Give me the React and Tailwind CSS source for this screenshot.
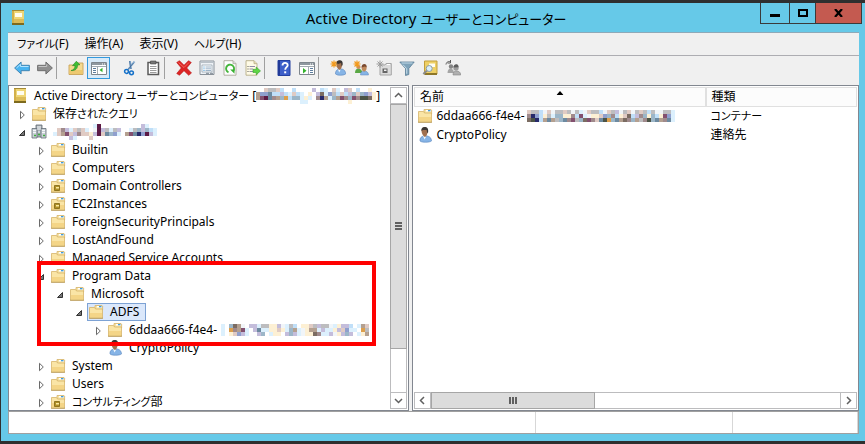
import React, { useState } from 'react';
import clsx from 'clsx';

/* ---------- icons ---------- */

const Icon = ({ children, className }) => (
  <svg viewBox="0 0 16 16" className={clsx('h-4 w-4 shrink-0', className)} aria-hidden="true">
    {children}
  </svg>
);

const BookIcon = ({ className }) => (
  <Icon className={className}>
    <path d="M2 0h12v14H2z" fill="#efd676" />
    <path d="M2 0h2v14H2z" fill="#d2b04a" />
    <path d="M4 9h10v4H4z" fill="#dcbc58" />
    <path d="M2 13h12v2H2z" fill="#7d6a1e" />
    <path d="M2 0h12v1H2z" fill="#a58a35" />
    <path d="M5 3h7v4H5z" fill="#fffdf0" />
  </Icon>
);

const FolderBase = () => (
  <>
    <path d="M7 1.500h7l.6.6V6H7z" fill="#f7e3a4" stroke="#d6b469" strokeWidth=".8" />
    <path d="M9 2h5v1.500H9z" fill="#fff" />
    <path d="M11 2h2.500v1.300H11z" fill="#3f9be0" />
    <path d="M1.500 3.500h5l1 1.500h7v9h-13z" fill="#fae5a6" stroke="#d6b469" strokeWidth=".8" />
    <path d="M2 9h12v4.600H2z" fill="#f4d587" />
    <path d="M1 14.300h14" stroke="#b3914a" strokeWidth=".8" />
  </>
);

const FolderIcon = () => (
  <Icon>
    <FolderBase />
  </Icon>
);

const OuIcon = () => (
  <Icon>
    <FolderBase />
    <path d="M4.500 7.500h5v5h-5z" fill="#b08f26" stroke="#7d6512" strokeWidth=".8" />
    <path d="M6 9h3v1.500H6z" fill="#fbe9a0" />
  </Icon>
);

const DomainIcon = () => (
  <Icon>
    <path d="M5 1h6v12H5z" fill="#a9b1b8" stroke="#5f6870" strokeWidth=".8" />
    <path d="M1 4.500h5v9.500H1zM10 4.500h5v9.500h-5z" fill="#c9d0d6" stroke="#626c75" strokeWidth=".8" />
    <path d="M6 3h4M6 5h4M2 6.500h3M2 8.500h3M11 6.500h3M11 8.500h3M7 8h2" stroke="#f4f7f9" />
    <path d="M3 11.500h2M12 11.500h2M7 10.500h2" stroke="#3fae3d" strokeWidth="1.500" />
  </Icon>
);

const PersonIcon = () => (
  <Icon>
    <path d="M3 14c-.5-3 1.500-4.500 3.500-5h4c2.500.5 4 2.500 4 5-1.500 1.500-10 1.800-11.500 0z" fill="#86b4e6" stroke="#5a87bd" strokeWidth=".6" />
    <path d="M6 9l1.500 3.500L9.300 9.500z" fill="#f4f8fc" />
    <path d="M4.500 3.500C4.500 1.500 5.800.3 7.500.3s3.300 1.200 3.300 3.500S9.500 9.800 8 9.800 4.500 6.500 4.500 3.500z" fill="#a0704f" />
    <path d="M4.500 4C4 1.500 5.500 0 7.700 0s4 1.200 3.400 5.500l-.9.5-.5-3H6z" fill="#3a3634" />
  </Icon>
);

const Star = () => (
  <path d="M4 .5v7M.5 4h7M1.500 1.500l5 5M6.500 1.500l-5 5" stroke="#f29a1d" strokeWidth="1.200" />
);

const BackIcon = () => (
  <Icon>
    <path d="M.6 8l6.500-6v3.300h8.300v5.400H7.100V14z" fill="#49b4f0" stroke="#3a7fae" strokeWidth=".9" />
    <path d="M2.500 8l4-3.700v2.200h8" stroke="#b4e4ff" fill="none" />
  </Icon>
);

const ForwardIcon = () => (
  <Icon>
    <path d="M15.400 8L8.900 2v3.300H.6v5.400h8.300V14z" fill="#8f8f8f" stroke="#686868" strokeWidth=".9" />
    <path d="M1.500 6.500h8.200v-2.200" stroke="#c4c4c4" fill="none" />
  </Icon>
);

const UpFolderIcon = () => (
  <Icon>
    <path d="M1 5h6l1-2h7v11.500H1z" fill="#f5da90" stroke="#c9a256" strokeWidth=".9" />
    <path d="M1.500 10h13v4h-13z" fill="#edc970" />
    <path d="M3 10.500c3-.5 4-2.500 4-5L4.500 5.700 8.300 1.300 12 4.700l-2.500.4C9.700 9 7 11 3 10.500z" fill="#3fbf35" stroke="#248a21" strokeWidth=".6" />
  </Icon>
);

const TreePaneIcon = () => (
  <Icon>
    <path d="M.5 2.500h15v12H.5z" fill="#fff" stroke="#7e868d" />
    <path d="M1 3h14v2H1z" fill="#8f989f" />
    <path d="M11 4h1M13 4h1" stroke="#fff" />
    <path d="M6.500 6v8M1 6.500h14" stroke="#a3abb1" />
    <path d="M2 8.500h3M2 10.500h3M2 12.500h3" stroke="#5c7d9e" />
    <path d="M11.500 7.700v4.600L8.500 10z" fill="#34b32c" />
  </Icon>
);

const ActionPaneIcon = () => (
  <Icon>
    <path d="M.5 2.500h15v12H.5z" fill="#fff" stroke="#7e868d" />
    <path d="M1 3h14v2H1z" fill="#8f989f" />
    <path d="M11 4h1M13 4h1" stroke="#fff" />
    <path d="M9.500 6v8M1 6.500h14" stroke="#a3abb1" />
    <path d="M11 8.500h3M11 10.500h3M11 12.500h3" stroke="#5c7d9e" />
    <path d="M4 8v5.500l3.500-2.700z" fill="#34b32c" />
  </Icon>
);

const CutIcon = () => (
  <Icon>
    <path d="M8 1l.9 8M12.500 1.500L5.800 10" stroke="#84a9cd" strokeWidth="2" />
    <path d="M7.500 1l1.500 8M11.500 3L6 9.500" stroke="#3c6593" strokeWidth=".7" />
    <circle cx="4.500" cy="11.500" r="1.900" fill="none" stroke="#1772c9" strokeWidth="1.500" />
    <circle cx="9.500" cy="12.800" r="1.900" fill="none" stroke="#1772c9" strokeWidth="1.500" />
  </Icon>
);

const PasteIcon = () => (
  <Icon>
    <path d="M3 2.500h10.500v12H3z" fill="#fff" stroke="#5a5a5a" strokeWidth="1.500" />
    <path d="M5.500 1h5.500v3H5.500z" fill="#777" stroke="#444" strokeWidth=".6" />
    <path d="M5 6.500h6.500M5 8.500h6.500M5 10.500h6.500M5 12.500h6.500" stroke="#9c9c9c" />
  </Icon>
);

const DeleteIcon = () => (
  <Icon>
    <path d="M.7 2.500L3.500.7 8 5.200 12.500.7l2.800 1.800L10.700 8l4.800 5-2.800 2.300L8 10.700 3.500 15.300.7 13.500 5.300 8z" fill="#dc2424" stroke="#b91a1a" strokeWidth=".6" />
    <path d="M2.500 2.500L8 7.500l5-5" stroke="#f36a5d" fill="none" />
  </Icon>
);

const PropertiesIcon = () => (
  <Icon>
    <path d="M1 1h14v13.500H1z" fill="#eef2f6" stroke="#8a929a" />
    <path d="M1.500 1.500h13V3h-13z" fill="#b9c1c8" />
    <path d="M3 5h10v7H3z" fill="#fff" stroke="#98a6b3" strokeWidth=".8" />
    <path d="M4.500 7h1M4.500 8.800h1M4.500 10.500h1" stroke="#3794d6" />
    <path d="M6.500 7H12M6.500 8.800H12M6.500 10.500H12" stroke="#9db3c7" />
    <path d="M7 13.300h3M11 13.300h3" stroke="#7b8590" />
  </Icon>
);

const RefreshIcon = () => (
  <Icon>
    <path d="M2 .7h9l3 3v11.500H2z" fill="#fff" stroke="#aaa79a" strokeWidth=".9" />
    <path d="M11 .7v3h3" fill="#ddd" stroke="#aaa79a" strokeWidth=".8" />
    <path d="M6.500 12.300a4 4 0 1 1 4.800-1.300" fill="none" stroke="#45b53b" strokeWidth="1.900" />
    <path d="M8.200 9.500h4.300v4.200z" fill="#38b030" />
  </Icon>
);

const ExportIcon = () => (
  <Icon>
    <path d="M1 .7h8l3 3v11.500H1z" fill="#fffbe6" stroke="#b5ac86" strokeWidth=".9" />
    <path d="M9 .7v3h3" fill="#e8dfb4" stroke="#b5ac86" strokeWidth=".8" />
    <path d="M2.500 6.500h1M2.500 9h1M2.500 11.500h1" stroke="#555" />
    <path d="M4.500 6.500H10M4.500 9H8M4.500 11.500H8" stroke="#8f8ba5" />
    <path d="M8 9.300h3.200V7l4.300 3.900-4.300 3.900v-2.300H8z" fill="#5fd545" stroke="#35a32a" strokeWidth=".6" />
  </Icon>
);

const HelpIcon = () => (
  <Icon>
    <path d="M2 .5h12v15H2z" fill="#3d5fc9" stroke="#2440a0" />
    <path d="M2 .5h2v15H2z" fill="#213a98" />
    <path d="M6.500 5.500c0-3.500 5.200-3.300 5.200-.3 0 2-2.500 2-2.500 4.500" fill="none" stroke="#fff" strokeWidth="1.800" />
    <path d="M8.200 11.300h2v2h-2z" fill="#fff" />
  </Icon>
);

const NewUserIcon = () => (
  <Icon>
    <path d="M5.500 14c-.3-3 1.500-4.500 3.500-5h3c2.300.5 3.700 2.500 3.700 5-1.500 1.500-8.700 1.800-10.200 0z" fill="#86b4e6" stroke="#5a87bd" strokeWidth=".6" />
    <path d="M8 9.300l1.200 3.200 1.500-3z" fill="#f4f8fc" />
    <path d="M6.500 4C6.500 2 7.500.8 9.200.8s3 1.200 3 3.500-1.200 5.500-2.600 5.500-3.100-2.800-3.100-5.800z" fill="#a0704f" />
    <path d="M6.500 4.500C6 1.700 7.500.3 9.500.3s3.800 1.200 3 5l-1 .7-.4-3z" fill="#3a3634" />
    <Star />
  </Icon>
);

const NewGroupIcon = () => (
  <Icon>
    <path d="M2 13c0-3 1.300-4.500 3.300-4.500s4 1.500 4 4.500z" fill="#5aa845" />
    <circle cx="5.500" cy="7" r="2.100" fill="#c78e60" />
    <path d="M7.500 15c0-3 1.500-4 3.700-4s4.300 1 4.300 4z" fill="#86b4e6" stroke="#5a87bd" strokeWidth=".5" />
    <path d="M8.600 8c0-2 1.200-3 2.500-3s2.500 1 2.500 3-1.200 3.500-2.500 3.500S8.600 10 8.600 8z" fill="#c08a5c" />
    <path d="M8.500 7.500C8.500 5 10 4 11.300 4s2.700 1 2.400 3.500L12 6.500z" fill="#7a4a30" />
    <Star />
  </Icon>
);

const NewOuIcon = () => (
  <Icon>
    <path d="M4 5h5l1-1.500h5.300V15H4z" fill="#dcdcdc" stroke="#a5a5a5" />
    <path d="M11 4.500h3" stroke="#fff" />
    <path d="M6.500 8.500h5V13h-5z" fill="#666" />
    <path d="M8 9.500h2.500v1.500H8z" fill="#f2f2f2" />
    <path d="M4 .5v7M.5 4h7M1.500 1.500l5 5M6.500 1.500l-5 5" stroke="#9b9b9b" />
  </Icon>
);

const FilterIcon = () => (
  <Icon>
    <path d="M.8 2h14.400L9.800 8.500V14.500L6.500 15.500v-7z" fill="#7fa3ba" stroke="#5b7f98" strokeWidth=".8" />
    <path d="M2.500 3h11" stroke="#c4dbe8" />
    <path d="M4 4.700l3.700 4v5" stroke="#c4dbe8" fill="none" />
  </Icon>
);

const FindIcon = () => (
  <Icon>
    <path d="M2.500 1h12.500v13H2.500z" fill="#eed066" stroke="#c29f3c" />
    <path d="M2.500 13h12.500v2H2.500z" fill="#8d7628" />
    <path d="M7 3.500h6v3.500H7z" fill="#fffdf0" />
    <path d="M5 10.500L1.300 14" stroke="#8a8a8a" strokeWidth="2" />
    <circle cx="7.200" cy="8.500" r="3" fill="#d8eefb" stroke="#8d9ca6" />
  </Icon>
);

const MembersIcon = () => (
  <Icon>
    <path d="M1 4.500C1.500 1.500 4 1 5.500 2M5.500 0v3h-3" fill="none" stroke="#555" />
    <path d="M2.500 13c0-3 1.300-4.500 3-4.500s3.500 1.500 3.500 4.500z" fill="#a5a5a5" />
    <circle cx="6" cy="6.500" r="2.200" fill="#858585" />
    <path d="M8 15c0-3 1.500-4 3.500-4s4.200 1 4.200 4z" fill="#b0b0b0" stroke="#858585" strokeWidth=".6" />
    <circle cx="11" cy="8" r="2.700" fill="#9c9c9c" />
    <path d="M8.500 7.500C8.500 5 10 4.300 11 4.300s2.800.5 2.600 3z" fill="#5c5c5c" />
  </Icon>
);

/* ---------- masked names ---------- */

const SHADES = {
  r: '#e0cbc4', g: '#bdbdbf', b: '#c0dff8', c: '#dcf0fd', n: '#a08a8c', m: '#83506f',
  M: '#5c1a45', d: '#6d8aa0', t: '#b4a090', u: '#c4bddb', o: '#dc9f4c', y: '#fdf0d4',
  w: '#f1f5f8', K: '#282a6a', k: '#4c5446', l: '#8f9fce', s: '#7b6c62', a: '#9cb6c8',
};

const Mosaic = ({ rows, className }) => (
  <svg
    width={rows[0].length * 4}
    height={rows.length * 4}
    className={clsx('shrink-0', className)}
    shapeRendering="crispEdges"
    aria-hidden="true"
  >
    {rows.map((row, y) =>
      row.split('').map((cell, x) =>
        SHADES[cell] ? <rect key={`${x}-${y}`} x={x * 4} y={y * 4} width="4" height="4" fill={SHADES[cell]} /> : null
      )
    )}
  </svg>
);

const SERVER = [
  '..rggrb..b....u.bc.rc.ur.b..y.',
  'tlldbbubcrbc.y.usclgbrbuaraluy',
  'tmMdntaobaacyc.nKtcatmnamnkksy',
  '...........cc..........y......',
];
const DOMAIN = [
  '..........cM..........uc..',
  '.rnucrgrc.wMugcgu..cgauabc',
  'crtmrunrryuMrdalc.tmdKlMuc',
  '....uc...r................',
];
const CHILD = [
  'c.astw.uucggyyuwcgb.yyrguggwcyuub.ctr',
  'c.ontmc.udccyyrycatcwyttcuccyurlcc.og',
  'c.yrluc..ua.cyy.uaucwyysnccuwyuau.cyt',
];
const GUID = [
  'rggbwrwggrgwgcwrggbwrguwgrwgrgbgwwggc',
  'nKlbygcaayynbmcwyyrlanbyrsbunayabymlc',
  'skKbtdtgadnmgasmnrdkoadtsnatgnkadtndc',
];

/* ---------- data ---------- */

const INDENTS = ['pl-0.5', 'pl-[7px]', 'pl-[26px]', 'pl-[45px]', 'pl-16', 'pl-[83px]'];

const TREE = [
  { label: 'Active Directory ユーザーとコンピューター', depth: 0, icon: BookIcon, mask: SERVER, brackets: true },
  { label: '保存されたクエリ', depth: 1, icon: FolderIcon, state: 'closed' },
  { label: '', depth: 1, icon: DomainIcon, state: 'open', mask: DOMAIN },
  { label: 'Builtin', depth: 2, icon: FolderIcon, state: 'closed' },
  { label: 'Computers', depth: 2, icon: FolderIcon, state: 'closed' },
  { label: 'Domain Controllers', depth: 2, icon: OuIcon, state: 'closed' },
  { label: 'EC2Instances', depth: 2, icon: OuIcon, state: 'closed' },
  { label: 'ForeignSecurityPrincipals', depth: 2, icon: FolderIcon, state: 'closed' },
  { label: 'LostAndFound', depth: 2, icon: FolderIcon, state: 'closed' },
  { label: 'Managed Service Accounts', depth: 2, icon: FolderIcon, state: 'closed' },
  { label: 'Program Data', depth: 2, icon: FolderIcon, state: 'open' },
  { label: 'Microsoft', depth: 3, icon: FolderIcon, state: 'open' },
  { label: 'ADFS', depth: 4, icon: FolderIcon, state: 'open' },
  { label: '6ddaa666-f4e4-', depth: 5, icon: FolderIcon, state: 'closed', mask: CHILD },
  { label: 'CryptoPolicy', depth: 5, icon: PersonIcon, state: 'leaf' },
  { label: 'System', depth: 2, icon: FolderIcon, state: 'closed' },
  { label: 'Users', depth: 2, icon: FolderIcon, state: 'closed' },
  { label: 'コンサルティング部', depth: 2, icon: OuIcon, state: 'closed' },
];

const MENUS = ['ファイル(F)', '操作(A)', '表示(V)', 'ヘルプ(H)'];

const TOOLS = [
  [['戻る', BackIcon], ['進む', ForwardIcon]],
  [['上へ', UpFolderIcon], ['ツリーの表示', TreePaneIcon]],
  [['切り取り', CutIcon], ['貼り付け', PasteIcon]],
  [['削除', DeleteIcon], ['プロパティ', PropertiesIcon], ['更新', RefreshIcon], ['エクスポート', ExportIcon]],
  [['ヘルプ', HelpIcon], ['操作ウィンドウ', ActionPaneIcon]],
  [
    ['新しいユーザー', NewUserIcon],
    ['新しいグループ', NewGroupIcon],
    ['新しい組織単位', NewOuIcon],
    ['フィルター', FilterIcon],
    ['検索', FindIcon],
    ['グループに追加', MembersIcon],
  ],
];

/* ---------- parts ---------- */

// kana are set one step smaller than kanji and latin
const Label = ({ text, kana = 'text-[11px]' }) => (
  <span className="whitespace-pre">
    {text.split(/([ぁ-ヿ]+)/).map((part, i) =>
      i % 2 ? (
        <span key={i} className={kana}>
          {part}
        </span>
      ) : (
        part
      )
    )}
  </span>
);

const TitleBar = () => (
  <header className="flex h-[29px] shrink-0 items-start">
    <div className="flex-1 pt-[7px] pl-[9px]">
      <BookIcon />
    </div>
    <h1 className="pt-[3px] text-[15px] leading-6">
      <Label text="Active Directory ユーザーとコンピューター" kana="text-[13px]" />
    </h1>
    <div className="flex flex-1 justify-end pr-[3px]">
      <div className="flex h-[21px] border border-t-0 border-[#3a3a3a]">
        <button aria-label="最小化" className="flex w-7 items-center justify-center">
          <span className="mt-1 h-[3px] w-[10px] bg-black" />
        </button>
        <button aria-label="最大化" className="flex w-[26px] items-center justify-center border-l border-[#3a3a3a]">
          <span className="h-2 w-[10px] border-2 border-black" />
        </button>
        <button aria-label="閉じる" className="flex w-[46px] items-center justify-center border-l border-[#3a3a3a] bg-[#c45a50]">
          <svg viewBox="0 0 9 8" className="h-2 w-[9px]" aria-hidden="true">
            <path d="M1 0l7 8M8 0L1 8" stroke="#000" strokeWidth="2.200" />
          </svg>
        </button>
      </div>
    </div>
  </header>
);

const Toolbar = () => (
  <div className="flex h-[30px] shrink-0 items-start border-t border-[#adadb2] pt-px pl-0.5">
    {TOOLS.map((group, i) => (
      <div key={i} className="flex">
        {i > 0 && <span className={clsx('mr-[7px] h-[22px] w-px', i === 2 ? 'bg-transparent' : 'bg-[#a0a0a0]')} />}
        {group.map(([name, Glyph]) => (
          <button
            key={name}
            aria-label={name}
            className={clsx(
              'flex h-[22px] w-[23px] items-center justify-center border',
              name === 'ツリーの表示' ? 'border-[#3399dd] bg-[#d8eaf8]' : 'border-transparent'
            )}
          >
            <Glyph />
          </button>
        ))}
      </div>
    ))}
  </div>
);

const Expander = ({ state, label }) => {
  if (state === 'leaf') return <span className="w-[14px] shrink-0" />;
  return (
    <button aria-label={`${label} ${state}`} className="flex w-[14px] shrink-0 pt-0.5 pl-0.5">
      <svg viewBox="0 0 8 10" className="h-[10px] w-2" aria-hidden="true">
        {state === 'open' ? (
          <path d="M6.500 2.500v5h-5z" fill="#777" stroke="#333" />
        ) : (
          <path d="M2.500 1.300v7.400L6.300 5z" fill="#fff" stroke="#6a6a6a" />
        )}
      </svg>
    </button>
  );
};

const TreeRow = ({ item, selected, onSelect }) => {
  const Glyph = item.icon;
  return (
    <li
      role="treeitem"
      aria-selected={selected}
      aria-level={item.depth + 1}
      className={clsx('flex h-[18px] items-center whitespace-nowrap', INDENTS[item.depth])}
    >
      {item.state && <Expander state={item.state} label={item.label} />}
      <button
        onClick={onSelect}
        aria-label={item.label ? undefined : 'domain'}
        className={clsx(
          'flex h-[18px] items-center gap-1.5 border pr-1.5',
          selected ? 'border-[#7da2d4] bg-[#dbe8fb]' : 'border-transparent'
        )}
      >
        <Glyph />
        {item.brackets ? (
          <span className="flex items-center">
            <Label text={`${item.label} [`} />
            <Mosaic rows={item.mask} />]
          </span>
        ) : (
          <span className="flex items-center">
            {item.label && <Label text={item.label} />}
            {item.mask && <Mosaic rows={item.mask} className={item.label && 'ml-1'} />}
          </span>
        )}
      </button>
    </li>
  );
};

const CHEVRONS = {
  up: 'M1 6l3.500-3.500L8 6',
  down: 'M1 3l3.500 3.500L8 3',
  left: 'M6 1L2.500 4.500 6 8',
  right: 'M3 1l3.500 3.500L3 8',
};

const ScrollButton = ({ dir, label }) => (
  <button
    aria-label={label}
    className="flex h-[17px] w-[17px] shrink-0 items-center justify-center border border-[#bcbcbe] bg-white"
  >
    <svg viewBox="0 0 9 9" className="h-[9px] w-[9px]" aria-hidden="true">
      <path d={CHEVRONS[dir]} fill="none" stroke="#606060" strokeWidth="1.500" />
    </svg>
  </button>
);

const Tree = () => {
  const [selected, setSelected] = useState(12);

  return (
    <section className="relative flex w-[401px] shrink-0 overflow-hidden border border-[#828790] bg-white p-px pl-0">
      <ul role="tree" className="min-w-0 flex-1">
        {TREE.map((item, i) => (
          <TreeRow key={i} item={item} selected={selected === i} onSelect={() => setSelected(i)} />
        ))}
      </ul>
      <div className="flex w-[17px] shrink-0 flex-col">
        <ScrollButton dir="up" label="上へスクロール" />
        <div className="flex flex-1 flex-col border-x border-[#bcbcbe]">
          <div className="-mx-px flex basis-[85%] flex-col items-center justify-center gap-px border border-[#a6a6a6] bg-[#dcdcdc]">
            <span className="h-0.5 w-[7px] bg-[#606060]" />
            <span className="h-0.5 w-[7px] bg-[#606060]" />
            <span className="h-0.5 w-[7px] bg-[#606060]" />
          </div>
        </div>
        <ScrollButton dir="down" label="下へスクロール" />
      </div>
      {/* highlight around the ADFS branch */}
      <div className="pointer-events-none absolute top-[175px] left-7 h-[85px] w-[339px] border-4 border-[#ff0000]" />
    </section>
  );
};

const ObjectList = () => (
  <section className="flex min-w-0 flex-1 flex-col border border-[#828790] bg-white p-px">
    <div className="min-h-0 flex-1 overflow-hidden">
      <table className="w-full table-fixed border-collapse text-left">
        <thead>
          <tr className="h-[19px] border border-[#e0e0e0] bg-[#fcfcfc]">
            <th className="relative w-[291px] border-r-2 border-[#e0e0e0] pl-[5px] font-normal">
              名前
              <svg viewBox="0 0 7 4" className="absolute top-[3px] left-1/2 h-1 w-[7px] -translate-x-1/2" aria-hidden="true">
                <path d="M3.500 0L7 4H0z" />
              </svg>
            </th>
            <th className="pl-[5px] font-normal">種類</th>
          </tr>
        </thead>
        <tbody>
          <tr className="h-[19px]">
            <td>
              <span className="flex items-center gap-1 pl-0.5">
                <FolderIcon />
                <span className="flex items-center whitespace-nowrap">
                  6ddaa666-f4e4-
                  <Mosaic rows={GUID} className="ml-0.5" />
                </span>
              </span>
            </td>
            <td className="pl-[5px]">
              <Label text="コンテナー" />
            </td>
          </tr>
          <tr className="h-[19px]">
            <td>
              <span className="flex items-center gap-1 pl-0.5">
                <PersonIcon />
                CryptoPolicy
              </span>
            </td>
            <td className="pl-[5px]">連絡先</td>
          </tr>
        </tbody>
      </table>
    </div>
    <div className="flex h-[17px] shrink-0">
      <ScrollButton dir="left" label="左へスクロール" />
      <div className="flex flex-1 border-y border-[#bcbcbe]">
        <div className="-my-px flex basis-[40%] items-center justify-center gap-px border border-[#a6a6a6] bg-[#dcdcdc]">
          <span className="h-[7px] w-0.5 bg-[#606060]" />
          <span className="h-[7px] w-0.5 bg-[#606060]" />
          <span className="h-[7px] w-0.5 bg-[#606060]" />
        </div>
      </div>
      <ScrollButton dir="right" label="右へスクロール" />
    </div>
  </section>
);

export default function App() {
  return (
    <div className="flex h-screen flex-col border-t-[3px] border-b-[3px] border-l border-[#2f2f2f] bg-[#66c9e8] font-['Noto_Sans','Noto_Sans_CJK_JP',sans-serif] text-[12px] leading-4 text-black [font-feature-settings:'palt']">
      <TitleBar />
      <main className="mr-[6px] mb-[7px] ml-[7px] flex min-h-0 flex-1 flex-col border-t border-[#8ea9b8] bg-[#f0f0f0]">
        <nav className="flex h-[22px] shrink-0 items-center gap-4 pl-[9px]">
          {MENUS.map((menu) => (
            <button key={menu}>
              <Label text={menu} />
            </button>
          ))}
        </nav>
        <Toolbar />
        <div className="flex min-h-0 flex-1 gap-[3px]">
          <Tree />
          <ObjectList />
        </div>
        <footer className="flex h-[23px] shrink-0 border border-[#a0a0a0] bg-white">
          <div className="flex-1 border-r border-[#d7d7d7]" />
          <div className="w-[197px] border-r border-[#d7d7d7]" />
          <div className="w-[125px] border-r border-[#d7d7d7]" />
        </footer>
      </main>
    </div>
  );
}
